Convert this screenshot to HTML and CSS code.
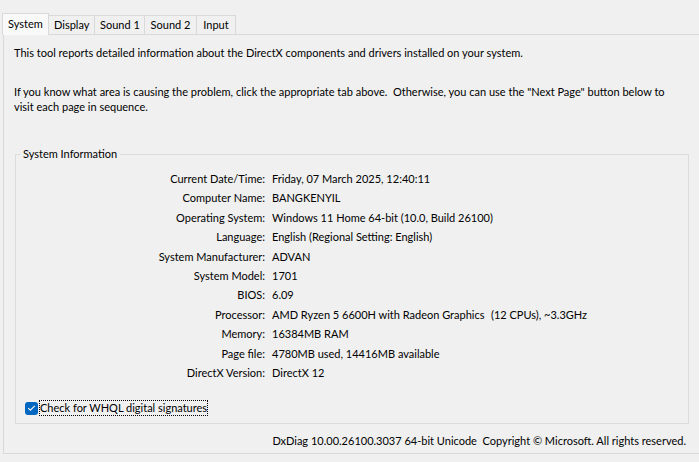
FILE: index.html
```html
<!DOCTYPE html>
<html>
<head>
<meta charset="utf-8">
<link rel="stylesheet" href="styles.css">
</head>
<body>
<div class="window">
  <div class="tabs">
    <div class="tab active">System</div>
    <div class="tab">Display</div>
    <div class="tab">Sound 1</div>
    <div class="tab">Sound 2</div>
    <div class="tab">Input</div>
  </div>
  <div class="page">
    <p class="intro">This tool reports detailed information about the DirectX components and drivers installed on your system.</p>
    <p class="intro2">If you know what area is causing the problem, click the appropriate tab above.&nbsp; Otherwise, you can use the "Next Page" button below to visit each page in sequence.</p>
    <fieldset class="group">
      <legend>System Information</legend>
      <div class="info">
        <div class="k">Current Date/Time:</div><div class="v">Friday, 07 March 2025, 12:40:11</div>
        <div class="k">Computer Name:</div><div class="v">BANGKENYIL</div>
        <div class="k">Operating System:</div><div class="v">Windows 11 Home 64-bit (10.0, Build 26100)</div>
        <div class="k">Language:</div><div class="v">English (Regional Setting: English)</div>
        <div class="k">System Manufacturer:</div><div class="v">ADVAN</div>
        <div class="k">System Model:</div><div class="v">1701</div>
        <div class="k">BIOS:</div><div class="v">6.09</div>
        <div class="k">Processor:</div><div class="v"><span class="cpu">AMD Ryzen 5 6600H with Radeon Graphics</span>(12 CPUs), ~3.3GHz</div>
        <div class="k">Memory:</div><div class="v">16384MB RAM</div>
        <div class="k">Page file:</div><div class="v">4780MB used, 14416MB available</div>
        <div class="k">DirectX Version:</div><div class="v">DirectX 12</div>
      </div>
      <label class="check">
        <span class="box"><svg width="14" height="14" viewBox="0 0 14 14"><path d="M3.5 7.2 L5.8 9.4 L10.5 4.6" fill="none" stroke="#ffffff" stroke-width="1.1"/></svg></span>
        <span class="check-label">Check for WHQL digital signatures</span>
      </label>
    </fieldset>
    <div class="footer">DxDiag 10.00.26100.3037 64-bit Unicode&nbsp; Copyright © Microsoft. All rights reserved.</div>
  </div>
</div>
</body>
</html>
```
FILE: styles.css
```css
html, body {
  margin: 0;
  padding: 0;
  background: #f0f0f0;
}
body {
  font-family: "Segoe UI", Lato, sans-serif;
  font-size: 11px;
  color: #000;
  width: 699px;
  height: 462px;
  overflow: hidden;
}
.window {
  padding-top: 13px;
  padding-left: 2px;
}
.tabs {
  display: flex;
  align-items: flex-end;
  height: 21px;
  position: relative;
  z-index: 1;
}
.tab {
  height: 19px;
  box-sizing: border-box;
  border: 1px solid #d9d9d9;
  border-bottom: none;
  background: #f0f0f0;
  padding: 0 5px;
  line-height: 18px;
  margin-left: -1px;
  white-space: nowrap;
  text-align: center;
}
.tab:nth-child(1) { width: 47px; margin-left: 0; }
.tab:nth-child(2) { width: 47px; }
.tab:nth-child(3) { width: 51px; }
.tab:nth-child(4) { width: 53px; }
.tab:nth-child(5) { width: 40px; }
.tab.active {
  background: #f9f9f9;
  line-height: 20px;
  margin-bottom: -1px;
  height: 22px;
}
.page {
  border: 1px solid #d9d9d9;
  border-right: none;
  margin-left: 1px;
  height: 420px;
  box-sizing: border-box;
  padding: 10px 0 0 10px;
  position: relative;
}
.intro {
  margin: 0;
  line-height: 16px;
}
.intro2 {
  margin: 23px 0 0 0;
  line-height: 15px;
  width: 670px;
}
.group {
  margin: 32px 0 0 1px;
  width: 674px;
  height: 278px;
  box-sizing: border-box;
  border: 1px solid #dcdcdc;
  padding: 9px 0 0 0;
}
.group legend {
  padding: 0 3px;
  margin-left: 4px;
  line-height: 16px;
}
.info {
  display: grid;
  grid-template-columns: 249px auto;
  column-gap: 7px;
  grid-auto-rows: 19.4px;
  line-height: 16px;
  white-space: nowrap;
}
.k { text-align: right; }
.cpu { display: inline-block; width: 219px; }
.check {
  display: flex;
  align-items: center;
  margin: 17px 0 0 9px;
}
.box {
  width: 13px;
  height: 13px;
  background: #0067c0;
  border-radius: 3px;
  display: flex;
  align-items: center;
  justify-content: center;
}
.box svg { display: block; }
.check-label {
  margin-left: 2px;
  outline: 1px dotted #000;
  line-height: 14px;
}
.footer {
  text-align: right;
  margin-top: 9px;
  padding-right: 13px;
  line-height: 16px;
}
```
